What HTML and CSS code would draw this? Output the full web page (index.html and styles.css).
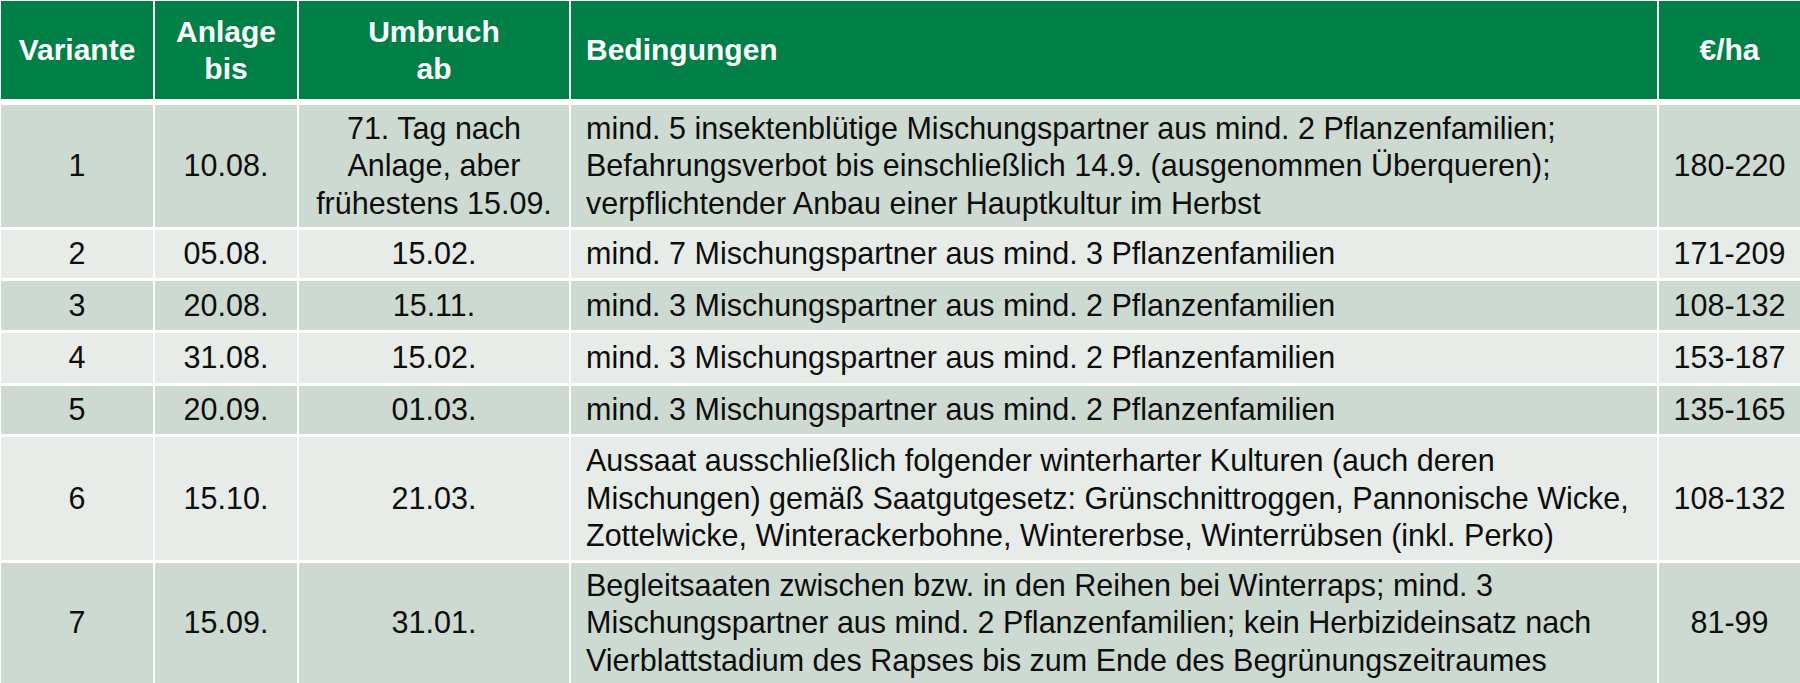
FILE: index.html
```html
<!DOCTYPE html>
<html lang="de">
<head>
<meta charset="utf-8">
<title>Varianten</title>
<link rel="stylesheet" href="styles.css">
</head>
<body>
<table class="grid">
  <colgroup>
    <col class="c-var">
    <col class="c-anl">
    <col class="c-umb">
    <col class="c-bed">
    <col class="c-eur">
  </colgroup>
  <thead>
    <tr class="head">
      <th class="ctr">Variante</th>
      <th class="ctr">Anlage<br>bis</th>
      <th class="ctr">Umbruch<br>ab</th>
      <th class="lft">Bedingungen</th>
      <th class="ctr">€/ha</th>
    </tr>
  </thead>
  <tbody>
    <tr class="dark r1">
      <td class="ctr">1</td>
      <td class="ctr">10.08.</td>
      <td class="ctr">71. Tag nach<br>Anlage, aber<br>frühestens 15.09.</td>
      <td class="lft">mind. 5 insektenblütige Mischungspartner aus mind. 2 Pflanzenfamilien;<br>Befahrungsverbot bis einschließlich 14.9. (ausgenommen Überqueren);<br>verpflichtender Anbau einer Hauptkultur im Herbst</td>
      <td class="ctr">180-220</td>
    </tr>
    <tr class="light r2">
      <td class="ctr">2</td>
      <td class="ctr">05.08.</td>
      <td class="ctr">15.02.</td>
      <td class="lft">mind. 7 Mischungspartner aus mind. 3 Pflanzenfamilien</td>
      <td class="ctr">171-209</td>
    </tr>
    <tr class="dark r3">
      <td class="ctr">3</td>
      <td class="ctr">20.08.</td>
      <td class="ctr">15.11.</td>
      <td class="lft">mind. 3 Mischungspartner aus mind. 2 Pflanzenfamilien</td>
      <td class="ctr">108-132</td>
    </tr>
    <tr class="light r4">
      <td class="ctr">4</td>
      <td class="ctr">31.08.</td>
      <td class="ctr">15.02.</td>
      <td class="lft">mind. 3 Mischungspartner aus mind. 2 Pflanzenfamilien</td>
      <td class="ctr">153-187</td>
    </tr>
    <tr class="dark r5">
      <td class="ctr">5</td>
      <td class="ctr">20.09.</td>
      <td class="ctr">01.03.</td>
      <td class="lft">mind. 3 Mischungspartner aus mind. 2 Pflanzenfamilien</td>
      <td class="ctr">135-165</td>
    </tr>
    <tr class="light r6">
      <td class="ctr">6</td>
      <td class="ctr">15.10.</td>
      <td class="ctr">21.03.</td>
      <td class="lft">Aussaat ausschließlich folgender winterharter Kulturen (auch deren<br>Mischungen) gemäß Saatgutgesetz: Grünschnittroggen, Pannonische Wicke,<br>Zottelwicke, Winterackerbohne, Wintererbse, Winterrübsen (inkl. Perko)</td>
      <td class="ctr">108-132</td>
    </tr>
    <tr class="dark r7">
      <td class="ctr">7</td>
      <td class="ctr">15.09.</td>
      <td class="ctr">31.01.</td>
      <td class="lft">Begleitsaaten zwischen bzw. in den Reihen bei Winterraps; mind. 3<br>Mischungspartner aus mind. 2 Pflanzenfamilien; kein Herbizideinsatz nach<br>Vierblattstadium des Rapses bis zum Ende des Begrünungszeitraumes</td>
      <td class="ctr">81-99</td>
    </tr>
  </tbody>
</table>
</body>
</html>
```
FILE: styles.css
```css
html, body {
  margin: 0;
  padding: 0;
  background: #ffffff;
  overflow: hidden;
}

body {
  width: 1800px;
  height: 683px;
  font-family: "Liberation Sans", Arial, sans-serif;
  font-size: 30px;
  line-height: 37.5px;
  color: #0d0d0d;
}

.grid {
  border-collapse: separate;
  border-spacing: 2px 3px;
  table-layout: fixed;
  width: 1803px;
  margin: -2px 0 0 -1px;
}

.c-var { width: 152px; }
.c-anl { width: 142px; }
.c-umb { width: 270px; }
.c-bed { width: 1086px; }
.c-eur { width: 141px; }

th, td {
  padding: 0;
  vertical-align: middle;
  overflow: hidden;
  white-space: nowrap;
}

td { font-size: 30.5px; }

.ctr { text-align: center; }
.lft { text-align: left; padding-left: 15px; }

.head th {
  background: #007f46;
  color: #ffffff;
  font-weight: bold;
  height: 98px;
  border-bottom: 3px solid #ffffff;
}

.dark td { background: #cddad2; }
.light td { background: #e7ece8; }

.r1 td { height: 122px; }
.r2 td { height: 48px; }
.r3 td { height: 49px; }
.r4 td { height: 50px; }
.r5 td { height: 48px; }
.r6 td { height: 123px; }
.r7 td { height: 120px; }
```
